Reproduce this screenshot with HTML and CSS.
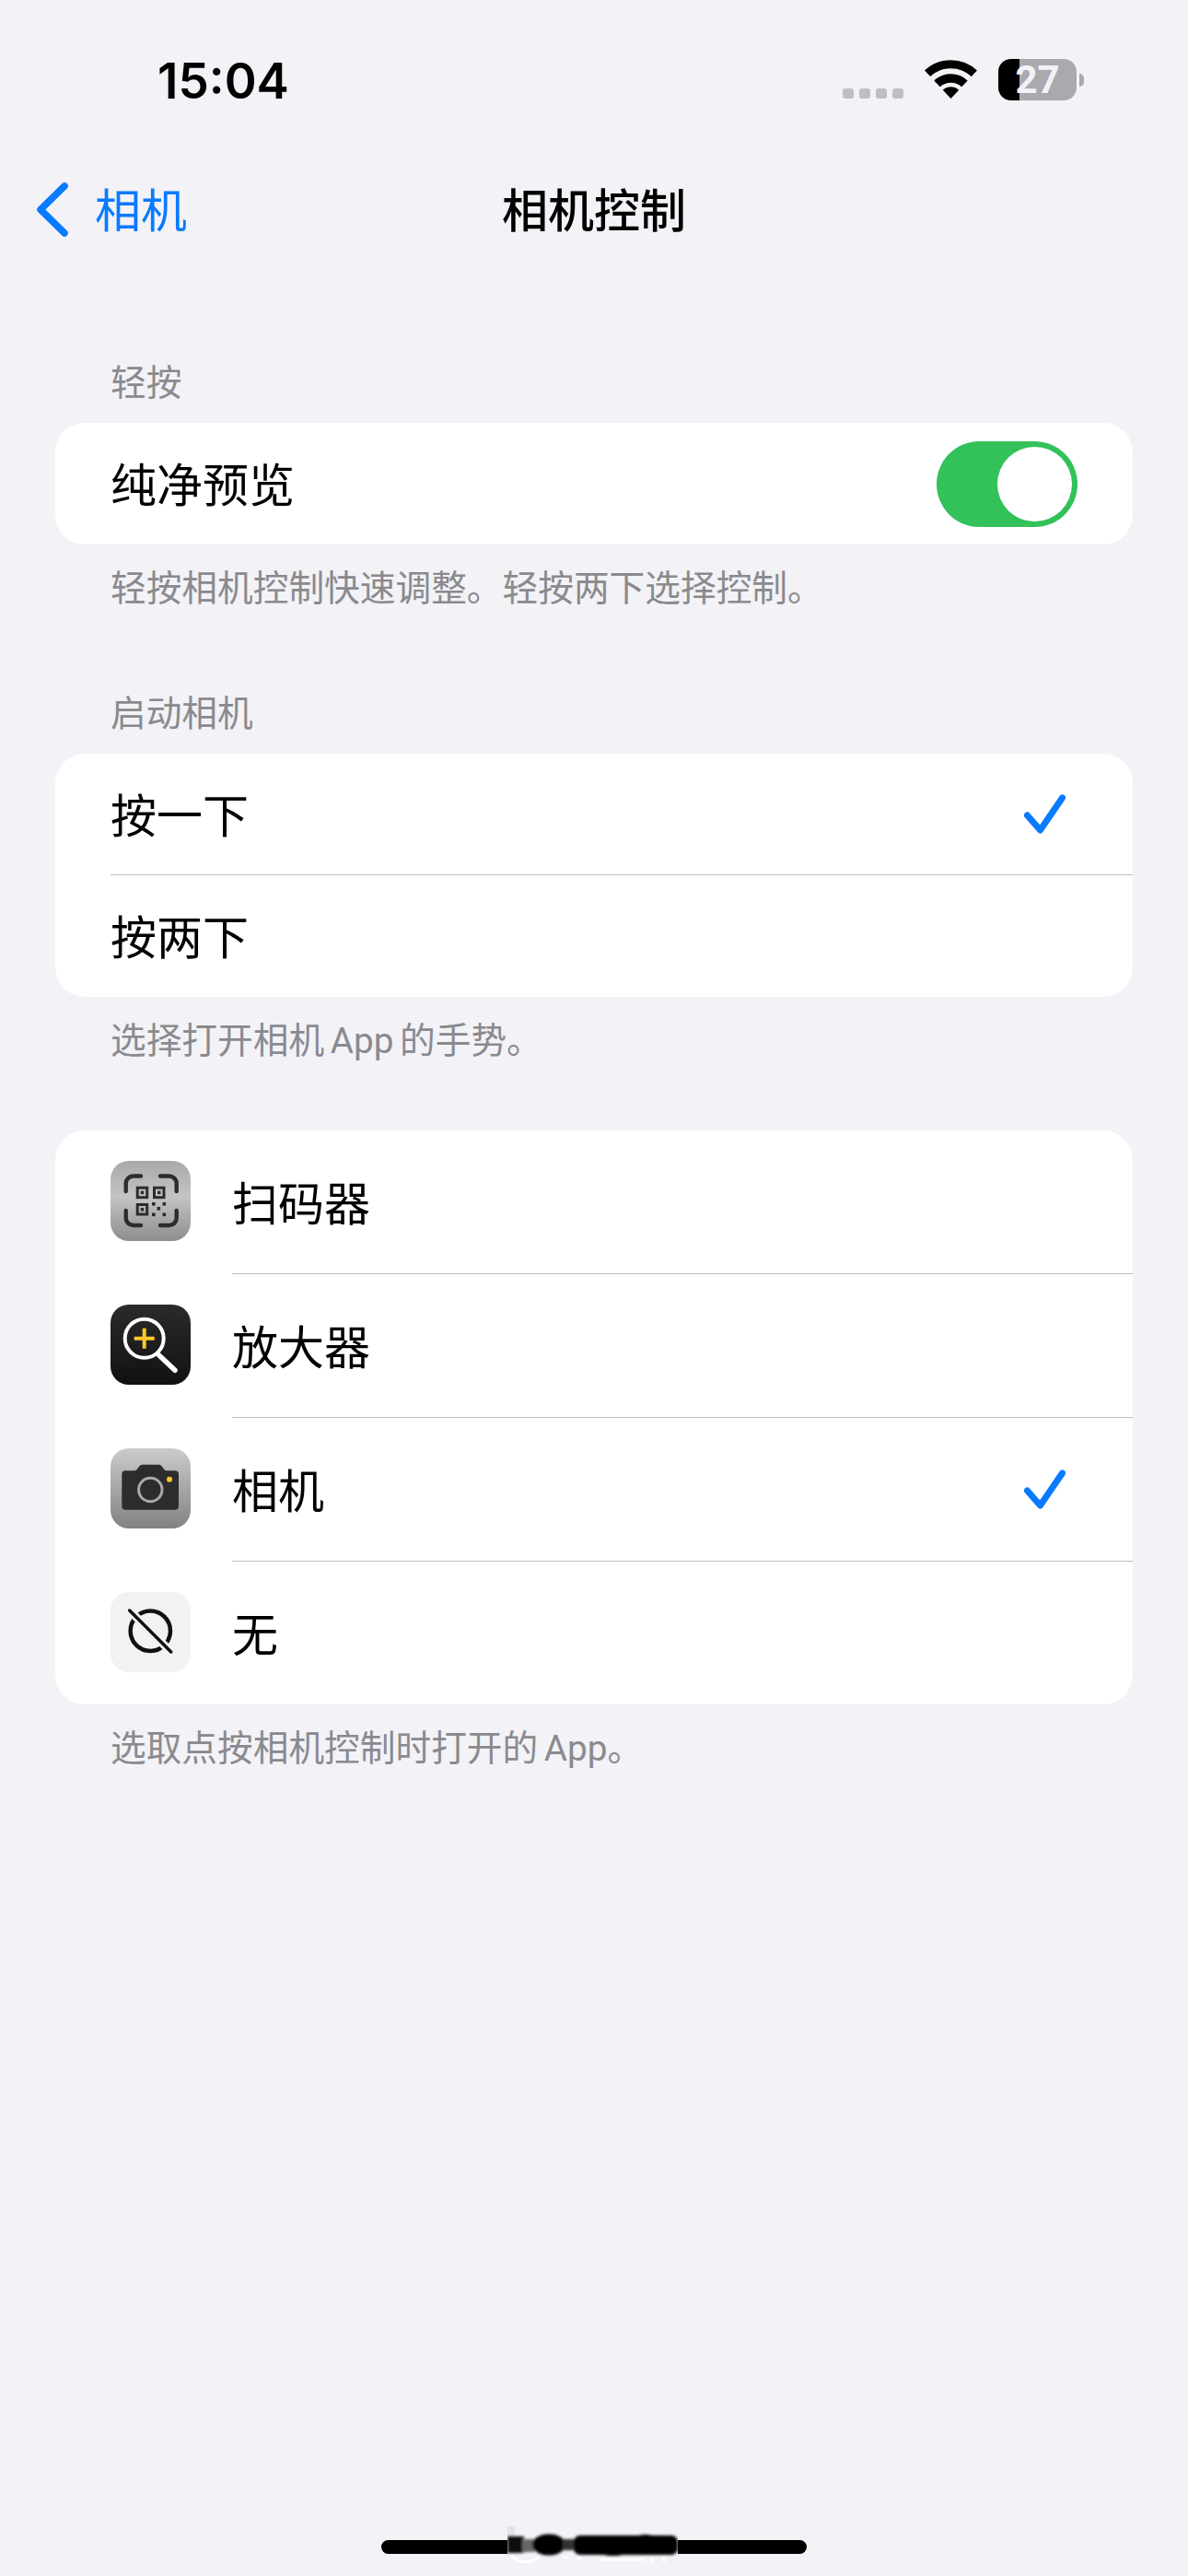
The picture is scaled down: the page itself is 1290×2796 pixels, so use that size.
FILE: index.html
```html
<!DOCTYPE html>
<html lang="zh-CN">
<head>
    <meta charset="UTF-8">
    <meta name="viewport" content="width=device-width, initial-scale=1.0">
    <title>相机控制</title>
    <link rel="stylesheet" href="styles.css">
</head>
<body>
    <div class="page">
        <header class="status-bar">
            <span class="time">15:04</span>
            <div class="status-icons">
                <div class="signal-dots"><i></i><i></i><i></i><i></i></div>
                <svg class="wifi" viewBox="0 0 57 42" width="57" height="42">
                    <path d="M3.1 14.8A37.2 37.2 0 0 1 53.9 14.8" fill="none" stroke="#000" stroke-width="9"/>
                    <path d="M13.5 25.9A22 22 0 0 1 43.5 25.9" fill="none" stroke="#000" stroke-width="9.4"/>
                    <path d="M28.5 42L19.8 32.7A12.7 12.7 0 0 1 37.2 32.7Z" fill="#000"/>
                </svg>
                <div class="battery">
                    <div class="battery-body">27</div>
                    <div class="battery-cap"></div>
                </div>
            </div>
        </header>

        <nav class="nav-bar">
            <div class="nav-back">
                <svg viewBox="0 0 36 59" width="36" height="59">
                    <path d="M31 4L5 29.5L31 55" fill="none" stroke="#0a7aff" stroke-width="7.5" stroke-linecap="round" stroke-linejoin="round"/>
                </svg>
                <span>相机</span>
            </div>
            <div class="nav-title">相机控制</div>
        </nav>

        <main class="settings">
            <section class="group group-tap">
                <h2 class="group-title">轻按</h2>
                <div class="card">
                    <div class="row">
                        <div class="row-body">
                            <span>纯净预览</span>
                            <div class="toggle"><div class="toggle-knob"></div></div>
                        </div>
                    </div>
                </div>
                <p class="group-note">轻按相机控制快速调整。轻按两下选择控制。</p>
            </section>

            <section class="group group-launch">
                <h2 class="group-title">启动相机</h2>
                <div class="card">
                    <div class="row">
                        <div class="row-body">
                            <span>按一下</span>
                            <svg class="check" viewBox="0 0 45 43" width="45" height="43">
                                <path d="M3.5 23L17.5 39L41.5 4" fill="none" stroke="#0a7aff" stroke-width="7" stroke-linecap="round" stroke-linejoin="round"/>
                            </svg>
                        </div>
                    </div>
                    <div class="row">
                        <div class="row-body">
                            <span>按两下</span>
                        </div>
                    </div>
                </div>
                <p class="group-note">选择打开相机 App 的手势。</p>
            </section>

            <section class="group group-apps">
                <div class="card">
                    <div class="row row-app">
                        <svg class="app-icon" viewBox="0 0 87 87" width="87" height="87">
                            <defs>
                                <linearGradient id="scanBg" x1="0" y1="0" x2="0" y2="1">
                                    <stop offset="0" stop-color="#a9a9a9"/>
                                    <stop offset="0.45" stop-color="#c4c4c4"/>
                                    <stop offset="1" stop-color="#8d8d8d"/>
                                </linearGradient>
                            </defs>
                            <rect width="87" height="87" rx="20" fill="url(#scanBg)"/>
                            <g fill="none" stroke="#2c2c2e" stroke-width="4.4" stroke-linecap="round">
                                <path d="M16.7 33V24.5a8 8 0 0 1 8-8H33"/>
                                <path d="M54 16.5H63.7a8 8 0 0 1 8 8V33"/>
                                <path d="M16.7 54V62a8 8 0 0 0 8 8H33"/>
                                <path d="M71.7 54V62a8 8 0 0 1-8 8H54"/>
                            </g>
                            <g fill="none" stroke="#2c2c2e" stroke-width="3">
                                <rect x="29.2" y="29.2" width="10.5" height="10.5"/>
                                <rect x="47.5" y="29.2" width="10.5" height="10.5"/>
                                <rect x="29.2" y="47.5" width="10.5" height="10.5"/>
                            </g>
                            <g fill="#2c2c2e">
                                <rect x="32.7" y="32.7" width="3.5" height="3.5"/>
                                <rect x="51" y="32.7" width="3.5" height="3.5"/>
                                <rect x="32.7" y="51" width="3.5" height="3.5"/>
                                <rect x="45" y="45" width="3.6" height="3.6"/>
                                <rect x="56.5" y="45" width="3.6" height="3.6"/>
                                <rect x="50.5" y="50" width="3.6" height="3.6"/>
                                <rect x="45" y="56.5" width="3.6" height="3.6"/>
                                <rect x="56.5" y="56.5" width="3.6" height="3.6"/>
                            </g>
                        </svg>
                        <div class="row-body"><span>扫码器</span></div>
                    </div>
                    <div class="row row-app">
                        <svg class="app-icon" viewBox="0 0 87 87" width="87" height="87">
                            <defs>
                                <linearGradient id="loupeBg" x1="0" y1="0" x2="0" y2="1">
                                    <stop offset="0" stop-color="#2b2b2b"/>
                                    <stop offset="1" stop-color="#111"/>
                                </linearGradient>
                            </defs>
                            <rect width="87" height="87" rx="20" fill="url(#loupeBg)"/>
                            <circle cx="36.7" cy="36.7" r="21" fill="none" stroke="#fff" stroke-width="4"/>
                            <path d="M52.7 55L70 71.3" fill="none" stroke="#fff" stroke-width="5.5" stroke-linecap="round"/>
                            <path d="M25.7 36.7H47.7M36.7 25.7V47.7" fill="none" stroke="#fdc92e" stroke-width="4"/>
                        </svg>
                        <div class="row-body"><span>放大器</span></div>
                    </div>
                    <div class="row row-app">
                        <svg class="app-icon" viewBox="0 0 87 87" width="87" height="87">
                            <defs>
                                <linearGradient id="cameraBg" x1="0" y1="0" x2="0" y2="1">
                                    <stop offset="0" stop-color="#cbcbcb"/>
                                    <stop offset="1" stop-color="#828282"/>
                                </linearGradient>
                            </defs>
                            <rect width="87" height="87" rx="20" fill="url(#cameraBg)"/>
                            <path d="M16.3 24.3H26C30 24.3 30 17.7 35 17.7H52C57 17.7 57 24.3 61 24.3H70a4 4 0 0 1 4 4V62.7a4 4 0 0 1-4 4H16.3a4 4 0 0 1-4-4V28.3a4 4 0 0 1 4-4Z" fill="#2c2c2e"/>
                            <circle cx="43.3" cy="45" r="12.7" fill="none" stroke="#a9a9a9" stroke-width="3"/>
                            <circle cx="64" cy="33.7" r="3" fill="#fdc92e"/>
                        </svg>
                        <div class="row-body">
                            <span>相机</span>
                            <svg class="check" viewBox="0 0 45 43" width="45" height="43">
                                <path d="M3.5 23L17.5 39L41.5 4" fill="none" stroke="#0a7aff" stroke-width="7" stroke-linecap="round" stroke-linejoin="round"/>
                            </svg>
                        </div>
                    </div>
                    <div class="row row-app">
                        <svg class="app-icon" viewBox="0 0 87 87" width="87" height="87">
                            <rect width="87" height="87" rx="20" fill="#f2f2f2"/>
                            <circle cx="43.3" cy="42.3" r="21.7" fill="none" stroke="#111" stroke-width="4.5"/>
                            <path d="M20.7 20L65.7 65" fill="none" stroke="#f2f2f2" stroke-width="9"/>
                            <path d="M20.7 20L65.7 65" fill="none" stroke="#111" stroke-width="3.5" stroke-linecap="round"/>
                        </svg>
                        <div class="row-body"><span>无</span></div>
                    </div>
                </div>
                <p class="group-note">选取点按相机控制时打开的 App。</p>
            </section>
        </main>

        <footer class="home-area">
            <div class="home-bar">
                <!-- scribbled-over stamp sitting on the bar -->
                <svg class="stamp" viewBox="0 0 185 45" width="185" height="45">
                    <defs>
                        <filter id="smear" x="-5%" y="-20%" width="110%" height="140%">
                            <feGaussianBlur stdDeviation="1.4"/>
                        </filter>
                    </defs>
                    <rect x="0" y="12" width="185" height="33" fill="#f2f2f7"/>
                    <rect x="0" y="2" width="8" height="12" fill="#e4e4e8"/>
                    <path d="M4 33C10 43 28 43 35 34" fill="none" stroke="#fff" stroke-width="3"/>
                    <path d="M60 36H66M78 34V40M100 38H150M158 36V41M170 34V41" fill="none" stroke="#fff" stroke-width="3"/>
                    <g filter="url(#smear)">
                        <rect x="0" y="13" width="18" height="18" fill="#111"/>
                        <rect x="16" y="16" width="14" height="14" fill="#666"/>
                        <ellipse cx="45" cy="22" rx="18" ry="11.5" fill="#000"/>
                        <rect x="60" y="16" width="16" height="12" fill="#333"/>
                        <rect x="72" y="12" width="113" height="21" rx="7" fill="#000"/>
                        <ellipse cx="115" cy="23" rx="24" ry="11" fill="#000"/>
                        <ellipse cx="150" cy="22" rx="16" ry="11" fill="#000"/>
                    </g>
                </svg>
            </div>
        </footer>
    </div>
</body>
</html>
```

FILE: styles.css
```css
* {
    box-sizing: border-box;
}
body {
    margin: 0;
    background-color: #f2f2f7;
    color: #000;
    font-family: Inter, "Noto Sans CJK SC", sans-serif;
}
.page {
    display: flex;
    flex-direction: column;
    min-height: 2796px;
}

/* status bar */
.status-bar {
    display: flex;
    justify-content: space-between;
    align-items: flex-start;
    height: 172px;
    padding: 64px 113px 0 171px;
}
.time {
    font-size: 53px;
    font-weight: 600;
    line-height: 48px;
}
.status-icons {
    display: flex;
    align-items: flex-end;
    gap: 23px;
    height: 45px;
}
.signal-dots {
    display: flex;
    gap: 6px;
    margin-bottom: 2px;
}
.signal-dots i {
    width: 12px;
    height: 11px;
    border-radius: 3px;
    background-color: #bfbfc3;
}
.wifi {
    display: block;
    margin-bottom: 2px;
}
.battery {
    display: flex;
    align-items: center;
    gap: 3px;
}
.battery-body {
    width: 85px;
    height: 45px;
    border-radius: 14px;
    background: linear-gradient(90deg, #000 23px, #a9a9ae 23px);
    color: #f2f2f7;
    font-family: Roboto, sans-serif;
    font-size: 42px;
    font-weight: 700;
    line-height: 45px;
    text-align: center;
}
.battery-cap {
    width: 5px;
    height: 14px;
    border-radius: 0 5px 5px 0;
    background-color: #a9a9ae;
}

/* navigation */
.nav-bar {
    display: grid;
    grid-template-columns: 1fr auto 1fr;
    align-items: center;
    height: 110px;
    font-size: 50px;
}
.nav-back {
    display: flex;
    align-items: center;
    gap: 28px;
    padding-left: 39px;
    color: #0a7aff;
}
.nav-back span,
.nav-title {
    margin-bottom: 5px;
}
.nav-title {
    font-weight: 500;
}

/* grouped list */
.settings {
    padding: 0 60px;
}
.group-tap {
    margin-top: 107px;
}
.group-launch {
    margin-top: 83px;
}
.group-apps {
    margin-top: 71px;
}
.group-title,
.group-note {
    margin: 0;
    padding-left: 60px;
    color: #8a8a8e;
    font-family: Roboto, "Noto Sans CJK SC", sans-serif;
    font-size: 38.7px;
    font-weight: 400;
    line-height: 53px;
    word-spacing: -3px;
}
.group-title {
    margin-bottom: 17px;
}
.group-note {
    margin-top: 21px;
}
.card {
    overflow: hidden;
    border-radius: 32px;
    background-color: #fff;
    font-size: 50px;
}
.row {
    display: flex;
    align-items: center;
    height: 132px;
    padding-left: 60px;
}
.row-app {
    height: 156px;
}
.row-app:last-child {
    height: 155px;
}
.row-body {
    display: flex;
    flex: 1;
    justify-content: space-between;
    align-items: center;
    height: 100%;
    padding-right: 60px;
    border-bottom: 1px solid #bdbdc0;
}
.row-body span {
    margin-bottom: 4px;
}
.row:last-child .row-body {
    border-bottom: none;
}
.app-icon {
    display: block;
    flex: none;
    margin-right: 45px;
    margin-bottom: 3px;
}
.check {
    display: block;
    margin-right: 13px;
}

/* switch */
.toggle {
    display: flex;
    justify-content: flex-end;
    align-items: center;
    width: 153px;
    height: 93px;
    padding-right: 6px;
    border-radius: 47px;
    background-color: #33c15a;
}
.toggle-knob {
    width: 81px;
    height: 81px;
    border-radius: 50%;
    background-color: #fff;
}

/* home indicator */
.home-area {
    display: flex;
    justify-content: center;
    margin-top: auto;
    padding-bottom: 24px;
}
.home-bar {
    position: relative;
    width: 462px;
    height: 15px;
    border-radius: 8px;
    background-color: #000;
}
.stamp {
    position: absolute;
    top: -17px;
    left: 137px;
}
```
